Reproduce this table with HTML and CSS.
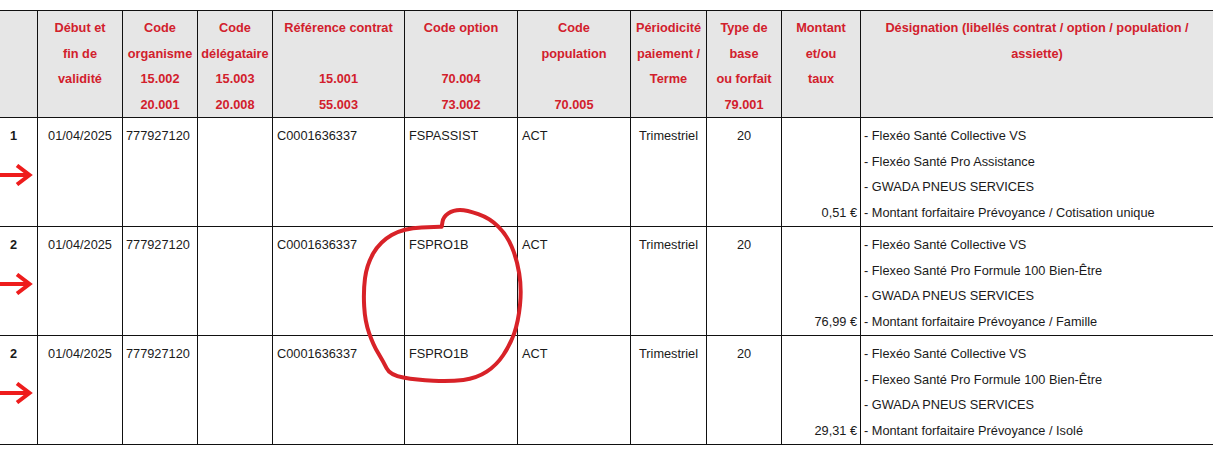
FILE: index.html
```html
<!DOCTYPE html>
<html lang="fr">
<head>
<meta charset="utf-8">
<title>Tableau des cotisations</title>
<link rel="stylesheet" href="styles.css">
</head>
<body>
<div class="page">
  <div class="grid">
    <div class="hc"></div>
    <div class="hc">Début et<br>fin de<br>validité</div>
    <div class="hc">Code<br>organisme<br>15.002<br>20.001</div>
    <div class="hc">Code<br>délégataire<br>15.003<br>20.008</div>
    <div class="hc">Référence contrat<br>&nbsp;<br>15.001<br>55.003</div>
    <div class="hc">Code option<br>&nbsp;<br>70.004<br>73.002</div>
    <div class="hc">Code<br>population<br>&nbsp;<br>70.005</div>
    <div class="hc">Périodicité<br>paiement /<br>Terme</div>
    <div class="hc">Type de<br>base<br>ou forfait<br>79.001</div>
    <div class="hc">Montant<br>et/ou<br>taux</div>
    <div class="hc">Désignation (libellés contrat / option / population /<br>assiette)</div>

    <div class="c num"><span class="n">1</span><svg class="arrow" viewBox="0 0 34 22" width="34" height="22"><path d="M0 11H29M17 1.5L29.5 11L17 20.5" fill="none" stroke="#ee1c1c" stroke-width="4"/></svg></div>
    <div class="c ctr">01/04/2025</div>
    <div class="c">777927120</div>
    <div class="c"></div>
    <div class="c pl">C0001636337</div>
    <div class="c pl">FSPASSIST</div>
    <div class="c pl">ACT</div>
    <div class="c ctr">Trimestriel</div>
    <div class="c ctr">20</div>
    <div class="c amt">0,51 €</div>
    <div class="c">- Flexéo Santé Collective VS<br>- Flexéo Santé Pro Assistance<br>- GWADA PNEUS SERVICES<br>- Montant forfaitaire Prévoyance / Cotisation unique</div>

    <div class="c num"><span class="n">2</span><svg class="arrow" viewBox="0 0 34 22" width="34" height="22"><path d="M0 11H29M17 1.5L29.5 11L17 20.5" fill="none" stroke="#ee1c1c" stroke-width="4"/></svg></div>
    <div class="c ctr">01/04/2025</div>
    <div class="c">777927120</div>
    <div class="c"></div>
    <div class="c pl">C0001636337</div>
    <div class="c pl">FSPRO1B</div>
    <div class="c pl">ACT</div>
    <div class="c ctr">Trimestriel</div>
    <div class="c ctr">20</div>
    <div class="c amt">76,99 €</div>
    <div class="c">- Flexéo Santé Collective VS<br>- Flexeo Santé Pro Formule 100 Bien-Être<br>- GWADA PNEUS SERVICES<br>- Montant forfaitaire Prévoyance / Famille</div>

    <div class="c num"><span class="n">2</span><svg class="arrow" viewBox="0 0 34 22" width="34" height="22"><path d="M0 11H29M17 1.5L29.5 11L17 20.5" fill="none" stroke="#ee1c1c" stroke-width="4"/></svg></div>
    <div class="c ctr">01/04/2025</div>
    <div class="c">777927120</div>
    <div class="c"></div>
    <div class="c pl">C0001636337</div>
    <div class="c pl">FSPRO1B</div>
    <div class="c pl">ACT</div>
    <div class="c ctr">Trimestriel</div>
    <div class="c ctr">20</div>
    <div class="c amt">29,31 €</div>
    <div class="c">- Flexéo Santé Collective VS<br>- Flexeo Santé Pro Formule 100 Bien-Être<br>- GWADA PNEUS SERVICES<br>- Montant forfaitaire Prévoyance / Isolé</div>
  </div>

  <svg class="scribble" viewBox="0 0 1213 464" width="1213" height="464">
    <path d="M441.7 226.7 L442.5 221.7 Q443.3 216.7 448.3 213.3 Q453.3 210 460 210 Q466.7 210 478.3 214.2 Q490 218.3 498.3 226.7 Q506.7 235 511.7 246.7 Q516.7 258.3 519.2 273.3 Q521.7 288.3 520 305 Q518.3 321.7 514.2 333.3 Q510 345 503.3 355 Q496.7 365 486.7 371.7 Q476.7 378.3 463.3 380 Q450 381.7 433.3 380.8 Q416.7 380 403.3 377.5 Q390 375 386.7 368.3 Q383.3 361.7 378.3 353.3 Q373.3 345 369.2 333.3 Q365 321.7 364.2 306.7 Q363.3 291.7 365 278.3 Q366.7 265 373.3 253.3 Q380 241.7 391.7 235 Q403.3 228.3 421.7 227.5 L440 226.7" fill="none" stroke="#d82228" stroke-width="4" stroke-linecap="round" stroke-linejoin="round"/>
  </svg>
</div>
</body>
</html>
```

FILE: styles.css
```css
html, body {
  margin: 0;
  padding: 0;
  background: #ffffff;
}

body {
  font-family: "Liberation Sans", Arial, sans-serif;
  font-size: 12.75px;
  color: #1a1a1a;
  overflow: hidden;
}

.page {
  position: relative;
  width: 1213px;
  height: 464px;
  padding-top: 10px;
  box-sizing: border-box;
}

.grid {
  display: grid;
  grid-template-columns: 38px 85px 75px 75px 132px 113px 113px 76px 75px 79px 352px;
  grid-auto-rows: 109px;
  grid-template-rows: 107px;
  border-top: 1px solid #111;
  line-height: 25.5px;
}

.hc,
.c {
  box-sizing: border-box;
  border-right: 1px solid #111;
  border-bottom: 1px solid #111;
  white-space: nowrap;
}

.hc:nth-child(11n),
.c:nth-child(11n) {
  border-right: none;
}

.hc {
  background: #e6e6e6;
  color: #d2202c;
  font-weight: bold;
  text-align: center;
  padding: 4px 2px 0;
}

.c {
  padding: 5px 3px 0;
  text-align: left;
}

.c.pl {
  padding-left: 4px;
}

.c.ctr {
  text-align: center;
}

.c.amt {
  text-align: right;
  padding-top: 81.5px;
}

.c.num {
  padding: 5px 0 0;
}

.n {
  display: block;
  padding-left: 10px;
  font-weight: bold;
}

.arrow {
  display: block;
  margin-top: 15.5px;
}

.scribble {
  position: absolute;
  left: 0;
  top: 0;
  pointer-events: none;
}
```
